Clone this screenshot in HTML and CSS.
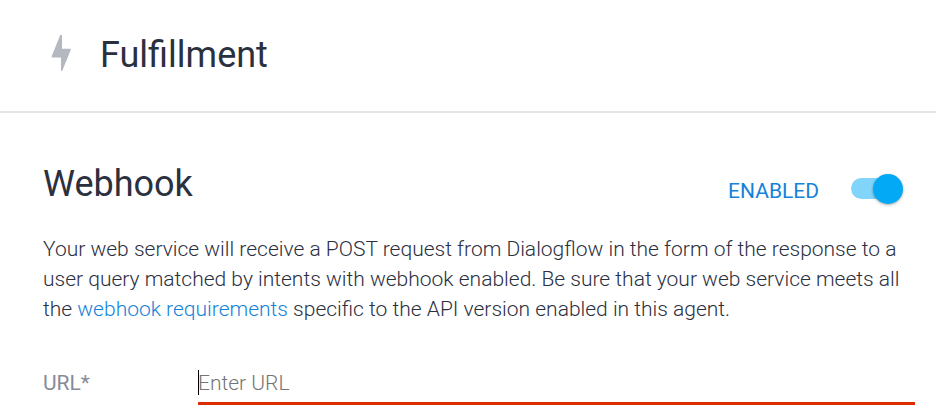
FILE: index.html
```html
<!DOCTYPE html>
<html lang="en">
<head>
<meta charset="utf-8">
<title>Fulfillment</title>
<link rel="stylesheet" href="styles.css">
</head>
<body>
<header class="page-header">
  <svg class="bolt" viewBox="0 0 20 36" aria-hidden="true"><path d="M9.600 0H11V13.700H19Q20 13.800 19.700 15L11.400 35.400Q11.200 36 10 36V22.400H1.200Q.500 22.200 .800 21L9 .500Q9.200 0 9.600 0Z"/></svg>
  <h1 class="title">Fulfillment</h1>
</header>
<main class="content">
  <div class="section-head">
    <h2 class="title">Webhook</h2>
    <label class="switch">
      <span class="switch-label">ENABLED</span>
      <input class="switch-input" type="checkbox" role="switch" checked>
    </label>
  </div>
  <p class="description">Your web service will receive a POST request from Dialogflow in the form of the response to a user query matched by intents with webhook enabled. Be sure that your web service meets all the <a class="link" href="#requirements">webhook requirements</a> specific to the API version enabled in this agent.</p>
  <div class="field">
    <label class="field-label" for="url">URL*</label>
    <div class="field-control">
      <input class="field-input" id="url" type="text" placeholder="Enter URL" autofocus>
    </div>
  </div>
</main>
</body>
</html>
```
FILE: styles.css
```css
* {
  box-sizing: border-box;
}

body {
  margin: 0;
  background: #fff;
  color: #2b303f;
  font-family: Roboto, "Liberation Sans", sans-serif;
  font-size: 21px;
}

.page-header {
  display: flex;
  align-items: flex-start;
  gap: 29px;
  padding: 33px 51px 34px;
  border-bottom: 2px solid #e4e5e7;
}

.bolt {
  width: 20px;
  height: 36px;
  margin-top: 2px;
  fill: #b4b8c1;
}

.title {
  margin: 0;
  font-size: 36px;
  font-weight: 400;
  line-height: 44px;
}

.content {
  padding: 49px 21px 0 43px;
}

.section-head {
  display: flex;
  align-items: flex-start;
  justify-content: space-between;
  padding-right: 12px;
}

.switch {
  display: flex;
  align-items: flex-start;
  gap: 32px;
  padding-top: 12px;
  color: #1482d9;
}

.switch-label {
  line-height: 34px;
}

.switch-input {
  appearance: none;
  position: relative;
  width: 52px;
  height: 30px;
  margin: 0;
}

.switch-input::before {
  content: "";
  position: absolute;
  inset: 4px 4px 5px 0;
  border-radius: 11px;
  background: #81d4fa;
}

.switch-input::after {
  content: "";
  position: absolute;
  top: 0;
  right: 0;
  width: 30px;
  height: 30px;
  border-radius: 50%;
  background: #03a9f4;
  box-shadow: 0 1px 3px rgba(0, 0, 0, 0.35);
}

.description {
  margin: 26px 0 0;
  font-weight: 300;
  line-height: 30px;
}

.link {
  color: #1482d9;
  text-decoration: none;
}

.field {
  display: flex;
  align-items: flex-start;
  margin-top: 40px;
  line-height: 38px;
}

.field-label {
  flex: 0 0 155px;
  color: #858b99;
}

.field-control {
  flex: 1;
  position: relative;
  min-width: 0;
}

/* Steady text cursor while the empty field has focus */
.field-control:focus-within::before {
  content: "";
  position: absolute;
  top: 6px;
  left: 0;
  width: 1px;
  height: 25px;
  background: #000;
}

.field-input {
  display: block;
  width: 100%;
  height: 41px;
  padding: 0;
  border: 0;
  border-bottom: 3px solid #dd2c00;
  outline: 0;
  background: transparent;
  caret-color: transparent;
  color: #2b303f;
  font: inherit;
  font-weight: 300;
}

.field-input::placeholder {
  color: #757575;
  opacity: 1;
}
```
